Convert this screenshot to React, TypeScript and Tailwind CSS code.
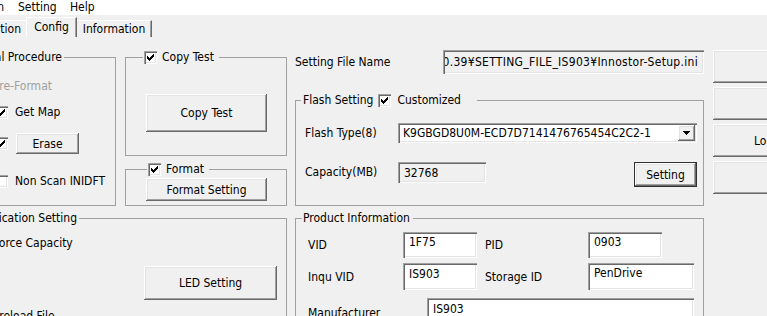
import type { ReactNode } from "react";

// classic win32 3D edges
const raised =
  "shadow-[inset_-1px_-1px_#696969,inset_1px_1px_#ffffff,inset_-2px_-2px_#a0a0a0,inset_2px_2px_#e3e3e3]";
const sunken =
  "shadow-[inset_1px_1px_#a0a0a0,inset_2px_2px_#696969,inset_-1px_-1px_#ffffff,inset_-2px_-2px_#e3e3e3]";

const CheckBox = ({ checked = false, disabled = false }: { checked?: boolean; disabled?: boolean }) => (
  <span
    className={`inline-flex h-[13px] w-[13px] shrink-0 items-center justify-center ${
      disabled ? "bg-[#f0f0f0]" : "bg-white"
    } ${sunken}`}
  >
    {checked && (
      <svg width="7" height="7" viewBox="0 0 7 7" shapeRendering="crispEdges">
        <path
          d="M0 2h1v3H0z M1 3h1v3H1z M2 4h1v3H2z M3 3h1v3H3z M4 2h1v3H4z M5 1h1v3H5z M6 0h1v3H6z"
          fill="#000"
        />
      </svg>
    )}
  </span>
);

const Button = ({ children, className = "" }: { children?: ReactNode; className?: string }) => (
  <button
    type="button"
    className={`flex shrink-0 items-center justify-center whitespace-nowrap bg-[#f0f0f0] ${raised} ${className}`}
  >
    {children}
  </button>
);

const Edit = ({ children, className = "" }: { children?: ReactNode; className?: string }) => (
  <div className={`flex shrink-0 items-start whitespace-nowrap bg-white pl-[6px] ${sunken} ${className}`}>
    {children}
  </div>
);

// legend whose start is off the left edge: keep the end of the text visible
const ClippedLegend = ({ text, width }: { text: string; width: string }) => (
  <span className={`flex justify-end overflow-hidden whitespace-nowrap ${width}`}>
    <span className="shrink-0">{text}</span>
  </span>
);

const ComboBox = () => (
  <div className={`flex h-[20px] w-[299px] shrink-0 items-center bg-white pl-[5px] ${sunken}`}>
    <span className="flex-1 whitespace-nowrap">K9GBGD8U0M-ECD7D7141476765454C2C2-1</span>
    <div className={`mr-[2px] flex h-[16px] w-[17px] items-center justify-center bg-[#f0f0f0] ${raised}`}>
      <svg width="7" height="4" viewBox="0 0 7 4" shapeRendering="crispEdges">
        <path d="M0 0h7v1H0z M1 1h5v1H1z M2 2h3v1H2z M3 3h1v1H3z" fill="#000" />
      </svg>
    </div>
  </div>
);

export default function App() {
  return (
    <div className="h-[316px] w-[767px] overflow-hidden bg-[#f0f0f0] font-['DejaVu_Sans_Condensed','DejaVu_Sans',sans-serif] text-[12px] leading-[14px] text-black">
      {/* menu bar */}
      <div className="flex h-[15px] bg-white">
        <div className="flex w-[18px] shrink-0 justify-end overflow-hidden pr-[14px]">
          <span className="shrink-0 whitespace-nowrap">Option</span>
        </div>
        <span className="w-[52px] shrink-0">Setting</span>
        <span>Help</span>
      </div>

      {/* tabs */}
      <div className="flex h-[22px] items-end">
        <div className="flex h-[17px] w-[26px] shrink-0 justify-end overflow-hidden border-t border-white pr-[5px] pt-[1px]">
          <span className="shrink-0 whitespace-nowrap">Function</span>
        </div>
        <div className="h-[20px] w-[51px] shrink-0 border-t border-l border-r border-white border-r-[#696969] pt-[2px] text-center shadow-[inset_-1px_0_#a0a0a0]">
          Config
        </div>
        <div className="h-[17px] w-[75px] shrink-0 border-t border-r border-white border-r-[#696969] pt-[1px] text-center shadow-[inset_-1px_0_#a0a0a0]">
          Information
        </div>
      </div>

      {/* page */}
      <div className="flex items-start">
        {/* left + middle */}
        <div className="-ml-[10px] flex w-[297px] shrink-0 flex-col">
          <div className="mt-[13px] flex gap-[9px]">
            <fieldset className="h-[156px] w-[126px] shrink-0 border border-[#a0a0a0]">
              <legend className="ml-[6px] px-[2px]">
                <ClippedLegend text="Normal Procedure" width="w-[63px]" />
              </legend>
              <div className="flex flex-col pl-[4px]">
                <div className="-ml-[22px] mt-[15px] flex h-[14px] items-center gap-[7px] text-[#a0a0a0]">
                  <CheckBox disabled />
                  Pre-Format
                </div>
                <div className="mt-[12px] flex h-[14px] items-center gap-[7px]">
                  <CheckBox checked />
                  Get Map
                </div>
                <div className="mt-[14px] flex h-[21px] items-center gap-[8px]">
                  <CheckBox checked />
                  <Button className="h-[21px] w-[63px]">Erase</Button>
                </div>
                <div className="mt-[20px] flex h-[14px] items-center gap-[7px] whitespace-nowrap">
                  <CheckBox />
                  Non Scan INIDFT
                </div>
              </div>
            </fieldset>

            <div className="flex w-[162px] shrink-0 flex-col">
              <fieldset className="h-[106px] border border-[#a0a0a0]">
                <legend className="ml-[17px] pl-[1px] pr-[5px]">
                  <span className="flex items-center gap-[5px]">
                    <CheckBox checked />
                    Copy Test
                  </span>
                </legend>
                <Button className="ml-[20px] mt-[30px] h-[38px] w-[121px]">Copy Test</Button>
              </fieldset>
              <fieldset className="mt-[6px] h-[44px] border border-[#a0a0a0]">
                <legend className="ml-[21px] pl-[1px] pr-[5px]">
                  <span className="flex items-center gap-[5px]">
                    <CheckBox checked />
                    Format
                  </span>
                </legend>
                <Button className="ml-[20px] mt-[2px] h-[23px] w-[121px]">Format Setting</Button>
              </fieldset>
            </div>
          </div>

          <fieldset className="mt-[5px] h-[120px] border border-[#a0a0a0]">
            <legend className="ml-[6px] px-[2px]">
              <ClippedLegend text="Application Setting" width="w-[78px]" />
            </legend>
            <div className="flex flex-col items-start pl-[4px]">
              <div className="-ml-[22px] mt-[11px] flex h-[14px] items-center gap-[7px] whitespace-nowrap">
                <CheckBox />
                Force Capacity
              </div>
              <Button className="ml-[149px] mt-[16px] h-[34px] w-[133px]">LED Setting</Button>
              <div className="-ml-[22px] mt-[9px] flex h-[14px] items-center gap-[7px] whitespace-nowrap">
                <CheckBox />
                Preload File
              </div>
            </div>
          </fieldset>
        </div>

        {/* right */}
        <div className="ml-[8px] flex w-[409px] shrink-0 flex-col">
          <div className="mt-[13px] flex h-[24px] items-center">
            <span className="w-[148px] shrink-0">Setting File Name</span>
            <div className={`flex h-[24px] w-[261px] shrink-0 items-center pr-[6px] ${sunken}`}>
              <div className="ml-[2px] flex flex-1 justify-end overflow-hidden whitespace-nowrap">
                <span className="shrink-0 tracking-[0.3px]">V1.0.39¥SETTING_FILE_IS903¥Innostor-Setup.ini</span>
              </div>
            </div>
          </div>

          <fieldset className="mt-[19px] h-[113px] border border-[#a0a0a0]">
            <legend className="ml-[5px] pl-[2px] pr-[16px]">
              <span className="flex items-center whitespace-nowrap">
                Flash Setting
                <span className="ml-[5px] mr-[6px] flex">
                  <CheckBox checked />
                </span>
                Customized
              </span>
            </legend>
            <div className="mt-[16px] flex items-center pl-[9px]">
              <span className="w-[93px] shrink-0">Flash Type(8)</span>
              <ComboBox />
            </div>
            <div className="mt-[19px] flex items-start pl-[9px]">
              <span className="mt-[3px] w-[93px] shrink-0">Capacity(MB)</span>
              <div className={`flex h-[21px] w-[88px] shrink-0 items-center pl-[6px] ${sunken}`}>32768</div>
              <Button className="ml-[148px] h-[25px] w-[63px] border border-[#303030]">Setting</Button>
            </div>
          </fieldset>

          <fieldset className="mt-[5px] h-[120px] border border-[#a0a0a0]">
            <legend className="ml-[6px] pl-[1px] pr-[3px]">Product Information</legend>
            <div className="mt-[7px] flex items-center pl-[12px]">
              <span className="w-[95px] shrink-0">VID</span>
              <Edit className="h-[26px] w-[74px] pt-[3px]">1F75</Edit>
              <span className="ml-[8px] w-[103px] shrink-0">PID</span>
              <Edit className="h-[26px] w-[74px] pt-[3px]">0903</Edit>
            </div>
            <div className="mt-[5px] flex items-center pl-[12px]">
              <span className="w-[95px] shrink-0">Inqu VID</span>
              <Edit className="h-[27px] w-[74px] pt-[4px]">IS903</Edit>
              <span className="ml-[8px] w-[103px] shrink-0">Storage ID</span>
              <Edit className="h-[27px] w-[106px] pt-[3px]">PenDrive</Edit>
            </div>
            <div className="mt-[8px] flex items-start pl-[12px]">
              <span className="mt-[8px] w-[119px] shrink-0">Manufacturer</span>
              <Edit className="h-[26px] w-[267px] pt-[4px]">IS903</Edit>
            </div>
          </fieldset>
        </div>

        {/* far right buttons */}
        <div className="ml-[9px] mt-[13px] flex shrink-0 flex-col gap-[4px]">
          <Button className="h-[33px] w-[150px]">Start</Button>
          <Button className="h-[33px] w-[150px]">Stop</Button>
          <Button className="h-[33px] w-[150px]">Load Setting</Button>
          <Button className="h-[33px] w-[150px]">Exit</Button>
        </div>
      </div>
    </div>
  );
}
